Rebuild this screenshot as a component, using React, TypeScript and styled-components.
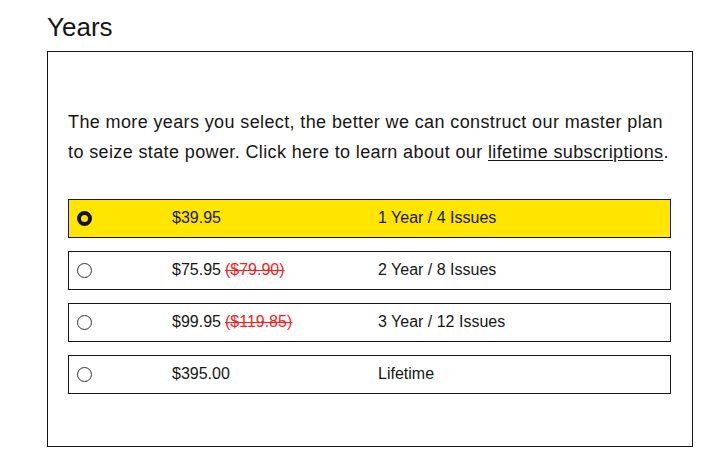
import styled, { createGlobalStyle } from 'styled-components';

const GlobalStyle = createGlobalStyle`
  body {
    margin: 0;
    background: #ffffff;
    font-family: "Liberation Sans", Arial, sans-serif;
    color: #161616;
  }
`;

const Page = styled.div`
  padding: 12px 18px 0 47px;
`;

const Title = styled.h2`
  margin: 0 0 9px;
  font-size: 26px;
  font-weight: 400;
  line-height: 30px;
`;

const Box = styled.div`
  width: 646px;
  box-sizing: border-box;
  border: 1px solid #161616;
  padding: 55px 21px 52px 20px;
`;

const Intro = styled.p`
  margin: 0 0 32px;
  font-size: 18px;
  letter-spacing: 0.38px;
  line-height: 30px;
  a {
    color: inherit;
    text-decoration: underline;
    text-underline-offset: 2px;
  }
`;

const Options = styled.div`
  display: flex;
  flex-direction: column;
  gap: 13px;
`;

const Option = styled.label<{ $selected?: boolean }>`
  display: grid;
  grid-template-columns: 103px 206px 1fr;
  align-items: center;
  height: 39px;
  box-sizing: border-box;
  border: 1px solid #161616;
  background: ${(p) => (p.$selected ? '#ffe500' : '#ffffff')};
  font-size: 16px;
  line-height: 18px;
  padding-bottom: 1px;
  cursor: pointer;
`;

const Radio = styled.span<{ $checked?: boolean }>`
  justify-self: start;
  margin-left: 8px;
  width: 15px;
  height: 15px;
  box-sizing: border-box;
  border-radius: 50%;
  border: ${(p) => (p.$checked ? '4px solid #111' : '1px solid #333')};
`;

const Price = styled.span``;

const OldPrice = styled.s`
  color: #ff1a1a;
  margin-left: 4px;
`;

const Term = styled.span``;

const plans = [
  { price: '$39.95', old: '', term: '1 Year / 4 Issues' },
  { price: '$75.95', old: '($79.90)', term: '2 Year / 8 Issues' },
  { price: '$99.95', old: '($119.85)', term: '3 Year / 12 Issues' },
  { price: '$395.00', old: '', term: 'Lifetime' },
];

export default function App() {
  const selected = 0;
  return (
    <Page>
      <GlobalStyle />
      <Title>Years</Title>
      <Box>
        <Intro>
          The more years you select, the better we can construct our master plan
          to seize state power. Click here to learn about our <a href="#">lifetime subscriptions</a>.
        </Intro>
        <Options>
          {plans.map((p, i) => (
            <Option key={p.term} $selected={i === selected}>
              <Radio $checked={i === selected} />
              <Price>
                {p.price}
                {p.old && <OldPrice>{p.old}</OldPrice>}
              </Price>
              <Term>{p.term}</Term>
            </Option>
          ))}
        </Options>
      </Box>
    </Page>
  );
}
